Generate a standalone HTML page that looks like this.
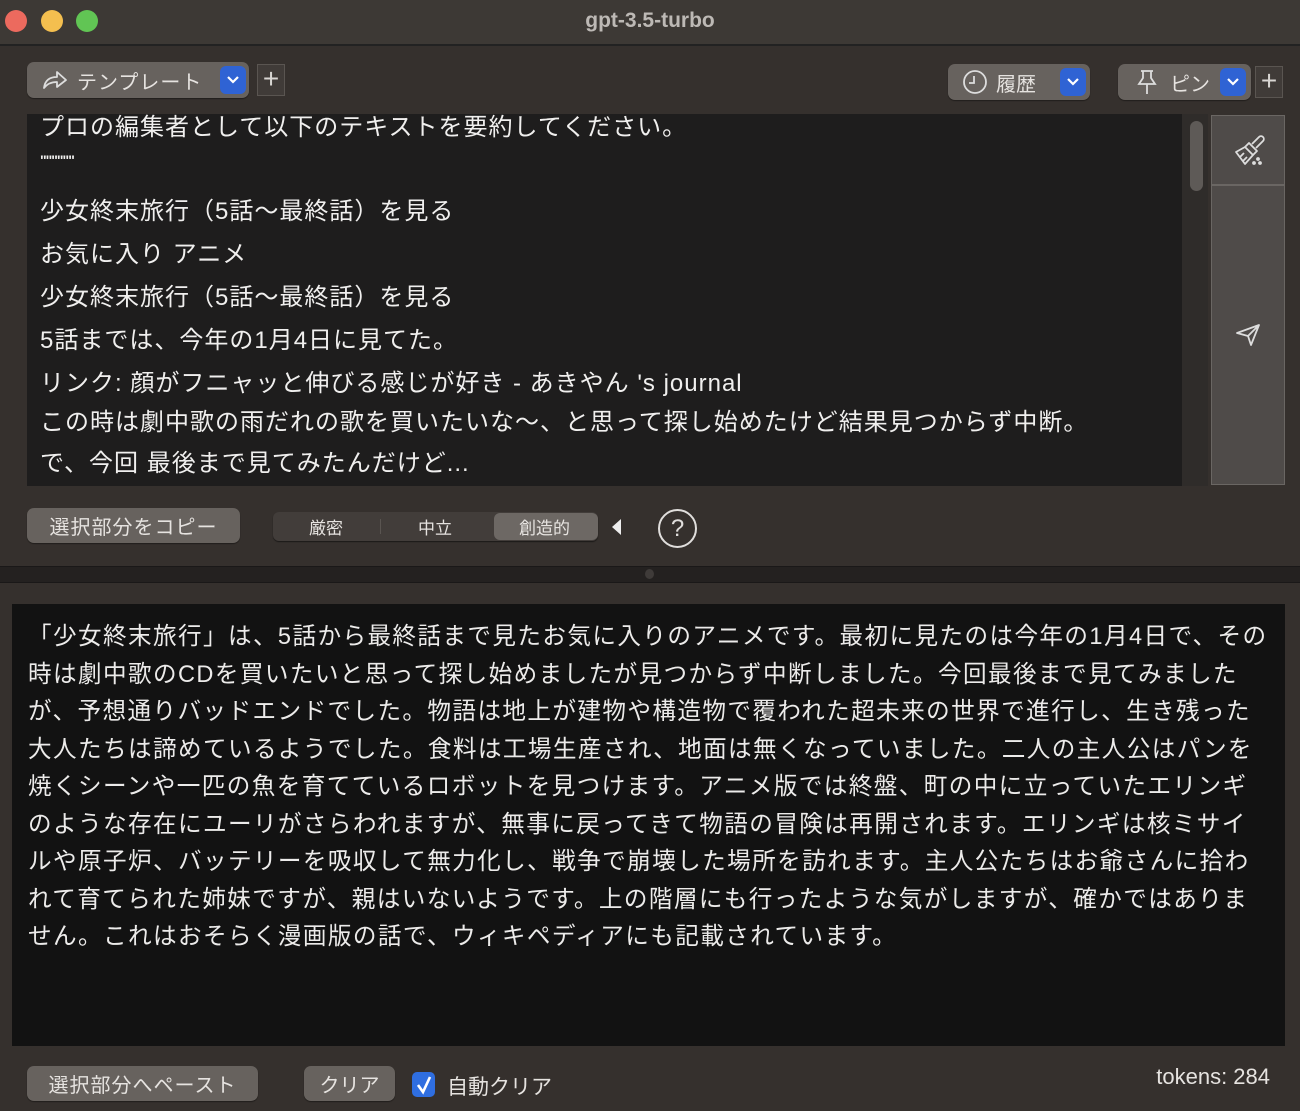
<!DOCTYPE html>
<html><head><meta charset="utf-8"><style>
*{margin:0;padding:0;box-sizing:border-box}
body{width:1300px;height:1111px;background:#35302d;position:relative;overflow:hidden;font-family:"Liberation Sans","Noto Sans CJK JP",sans-serif;color:#e8e6e4}
.a{position:absolute}
.btn{position:absolute;background:#67625e;border-radius:7px;color:#e6e3e0;font-size:20px;display:flex;align-items:center;justify-content:center;box-shadow:0 1px 1px rgba(0,0,0,.4)}
.dd{position:absolute;width:26px;height:28px;background:#2f63d4;border-radius:6px;display:flex;align-items:center;justify-content:center}
.plus{position:absolute;width:28px;height:32px;border:1px solid #5a5551;background:#403b38;color:#d8d5d2;font-size:28px;line-height:28px;text-align:center;font-weight:300}
.ln{position:absolute;left:40px;font-size:24px;white-space:nowrap;color:#f0efee;letter-spacing:1px}
.out{position:absolute;left:28px;top:619px;font-size:23.6px;line-height:37.5px;white-space:nowrap;color:#ecebea;letter-spacing:1.4px}
</style></head><body>
<div class="a" style="left:0;top:0;width:1300px;height:46px;background:#3d3935;border-bottom:2px solid #222"></div>
<div class="a" style="left:5px;top:10px;width:22px;height:22px;border-radius:50%;background:#ec6a5e"></div>
<div class="a" style="left:41px;top:10px;width:22px;height:22px;border-radius:50%;background:#f4bf4f"></div>
<div class="a" style="left:76px;top:10px;width:22px;height:22px;border-radius:50%;background:#61c554"></div>
<div class="a" style="left:0;width:1300px;top:9px;text-align:center;font-size:21px;font-weight:bold;color:#bdb9b5">gpt-3.5-turbo</div>

<div class="btn" style="left:27px;top:62px;width:222px;height:36px;justify-content:flex-start;padding-left:14px">
<svg width="28" height="24" viewBox="0 0 28 24" fill="none" stroke="#ddd" stroke-width="1.8" stroke-linejoin="round"><path d="M3 20 C4 12 9 9 16 9 V4 L25 12 L16 19 V14 C10 14 6 16 3 20Z"/></svg>
<span style="margin-left:8px;letter-spacing:1px">テンプレート</span></div>
<div class="dd" style="left:220px;top:66px"><svg width="14" height="10"><path d="M2 2 L7 7 L12 2" stroke="#fff" stroke-width="2.2" fill="none"/></svg></div>
<div class="plus" style="left:257px;top:64px">+</div>

<div class="btn" style="left:948px;top:64px;width:142px;height:36px;justify-content:flex-start;padding-left:14px">
<svg width="26" height="26" viewBox="0 0 26 26" fill="none" stroke="#ddd" stroke-width="1.8"><circle cx="13" cy="13" r="11"/><path d="M12 7 V14 H7"/></svg>
<span style="margin-left:8px">履歴</span></div>
<div class="dd" style="left:1060px;top:68px"><svg width="14" height="10"><path d="M2 2 L7 7 L12 2" stroke="#fff" stroke-width="2.2" fill="none"/></svg></div>
<div class="btn" style="left:1118px;top:64px;width:133px;height:36px;justify-content:flex-start;padding-left:18px">
<svg width="22" height="28" viewBox="0 0 22 28" fill="none" stroke="#ddd" stroke-width="1.8"><path d="M5 3 H17 M7 3 V10 L3 16 H19 L15 10 V3 M11 16 V26"/></svg>
<span style="margin-left:12px">ピン</span></div>
<div class="dd" style="left:1220px;top:68px"><svg width="14" height="10"><path d="M2 2 L7 7 L12 2" stroke="#fff" stroke-width="2.2" fill="none"/></svg></div>
<div class="plus" style="left:1255px;top:66px">+</div>

<div class="a" style="left:27px;top:114px;width:1155px;height:372px;background:#1e1d1d;overflow:hidden">
</div>
<div class="a" style="left:1182px;top:114px;width:26px;height:372px;background:#2f2c2a"></div>
<div class="a" style="left:1190px;top:121px;width:13px;height:70px;border-radius:7px;background:#5e5a57"></div>
<div class="a" style="left:1211px;top:115px;width:74px;height:70px;background:#4f4b49;border:1px solid #6a6663"></div>
<div class="a" style="left:1211px;top:185px;width:74px;height:300px;background:#4f4b49;border:1px solid #6a6663"></div>
<svg class="a" style="left:1232px;top:132px" width="34" height="36" viewBox="0 0 34 36" fill="none" stroke="#ddd" stroke-width="1.8" stroke-linejoin="round"><path d="M20 12 L27 5 A2.5 2.5 0 0 1 31 9 L24 16"/><path d="M17 11 L25 19 L21 23 L13 15Z"/><path d="M13 15 L4 20 L13 32 L21 23"/><path d="M8 25 L12 21 M11 29 L15 25"/><circle cx="26" cy="27" r="1" fill="#ddd"/><circle cx="22" cy="31" r="1" fill="#ddd"/><circle cx="28" cy="31" r="1" fill="#ddd"/></svg>
<svg class="a" style="left:1235px;top:323px" width="26" height="24" viewBox="0 0 26 24" fill="none" stroke="#ddd" stroke-width="1.8" stroke-linejoin="round"><path d="M2 10 L24 2 L16 22 L13 13 Z M13 13 L24 2"/></svg>

<div class="ln" style="top:107px">プロの編集者として以下のテキストを要約してください。</div>
<div class="ln" style="top:152px;font-size:14px;font-weight:bold;letter-spacing:-1px">""""""</div>
<div class="ln" style="top:191px">少女終末旅行（5話〜最終話）を見る</div>
<div class="ln" style="top:234px">お気に入り アニメ</div>
<div class="ln" style="top:277px">少女終末旅行（5話〜最終話）を見る</div>
<div class="ln" style="top:320px">5話までは、今年の1月4日に見てた。</div>
<div class="ln" style="top:363px">リンク: 顔がフニャッと伸びる感じが好き - あきやん 's journal</div>
<div class="ln" style="top:402px">この時は劇中歌の雨だれの歌を買いたいな〜、と思って探し始めたけど結果見つからず中断。</div>
<div class="ln" style="top:443px">で、今回 最後まで見てみたんだけど...</div>

<div class="btn" style="left:27px;top:508px;width:213px;height:35px;letter-spacing:1px">選択部分をコピー</div>
<div class="a" style="left:273px;top:512px;width:325px;height:29px;background:#423d3a;border-radius:6px;box-shadow:0 1px 1px rgba(0,0,0,.5);font-size:17px;color:#e6e3e0">
<span class="a" style="left:36px;top:2px">厳密</span>
<span class="a" style="left:107px;top:7px;width:1px;height:15px;background:#5a5551"></span>
<span class="a" style="left:145px;top:2px">中立</span>
<span class="a" style="left:221px;top:1px;width:104px;height:27px;background:#6d6864;border-radius:6px"></span>
<span class="a" style="left:246px;top:2px">創造的</span>
</div>
<div class="a" style="left:612px;top:519px;width:0;height:0;border-top:8px solid transparent;border-bottom:8px solid transparent;border-right:9px solid #eee"></div>
<div class="a" style="left:658px;top:509px;width:39px;height:39px;border:2px solid #e0dedc;border-radius:50%;text-align:center;font-size:24px;line-height:35px;color:#e0dedc">?</div>

<div class="a" style="left:0;top:566px;width:1300px;height:17px;background:#242120;border-top:1px solid #1a1818;border-bottom:1px solid #1a1818"></div>
<div class="a" style="left:645px;top:569px;width:9px;height:10px;border-radius:50%;background:#3f3b39"></div>

<div class="a" style="left:12px;top:604px;width:1273px;height:442px;background:#121212"></div>
<div class="out">「少女終末旅行」は、5話から最終話まで見たお気に入りのアニメです。最初に見たのは今年の1月4日で、その<br>時は劇中歌のCDを買いたいと思って探し始めましたが見つからず中断しました。今回最後まで見てみました<br>が、予想通りバッドエンドでした。物語は地上が建物や構造物で覆われた超未来の世界で進行し、生き残った<br>大人たちは諦めているようでした。食料は工場生産され、地面は無くなっていました。二人の主人公はパンを<br>焼くシーンや一匹の魚を育てているロボットを見つけます。アニメ版では終盤、町の中に立っていたエリンギ<br>のような存在にユーリがさらわれますが、無事に戻ってきて物語の冒険は再開されます。エリンギは核ミサイ<br>ルや原子炉、バッテリーを吸収して無力化し、戦争で崩壊した場所を訪れます。主人公たちはお爺さんに拾わ<br>れて育てられた姉妹ですが、親はいないようです。上の階層にも行ったような気がしますが、確かではありま<br>せん。これはおそらく漫画版の話で、ウィキペディアにも記載されています。</div>

<div class="btn" style="left:27px;top:1066px;width:231px;height:35px;letter-spacing:1px">選択部分へペースト</div>
<div class="btn" style="left:304px;top:1066px;width:91px;height:35px">クリア</div>
<div class="a" style="left:412px;top:1072px;width:23px;height:25px;background:#2f6ee0;border-radius:5px"></div>
<svg class="a" style="left:414px;top:1074px" width="20" height="22"><path d="M4 11 L9 18 L16 3" stroke="#fff" stroke-width="2.6" fill="none"/></svg>
<div class="a" style="left:447px;top:1071px;font-size:21px;color:#e6e3e0">自動クリア</div>
<div class="a" style="left:1100px;top:1064px;width:170px;text-align:right;font-size:22px;color:#e6e3e0">tokens: 284</div>
</body></html>
